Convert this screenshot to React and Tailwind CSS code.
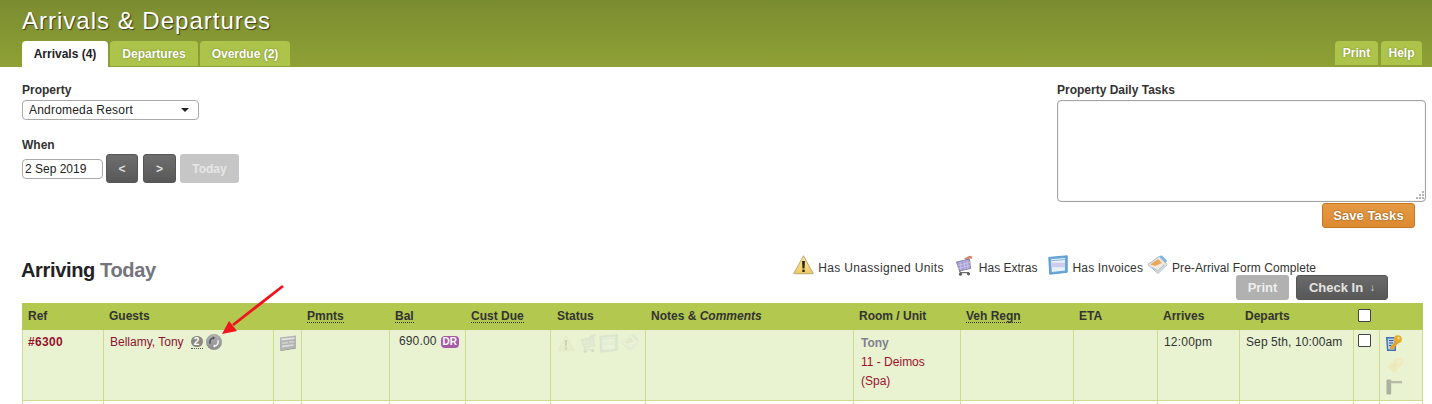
const COLS = [81, 170, 28, 88, 76, 85, 95, 208, 107, 113, 84, 82, 114, 26, 43];

function Warn({ className = "" }) {
  return (
    <svg viewBox="0 0 21 20" className={className}>
      <defs>
        <linearGradient id="wg" x1="0" y1="0" x2="0" y2="1">
          <stop offset="0" stopColor="#fbeeb0" />
          <stop offset="1" stopColor="#efc860" />
        </linearGradient>
      </defs>
      <path d="M10.5 1 20.2 18.6H.8z" fill="url(#wg)" stroke="#c6b07a" strokeWidth="1.1" strokeLinejoin="round" />
      <path d="M9 6h3l-.5 7.6h-2z" fill="#2f2a18" />
      <rect x="9.3" y="14.6" width="2.4" height="2.4" fill="#2f2a18" />
    </svg>
  );
}
function Cart({ className = "" }) {
  return (
    <svg viewBox="0 0 18 21" className={className}>
      <path d="M9 3.5 14.5.8l3 .6-1 2.6-2-.6-3 1.6z" fill="#d28a6e" />
      <path d="M1.5 7 14.5 4l1 9.5-11 2.5z" fill="#a8a0d8" stroke="#77748f" strokeWidth=".8" />
      <path d="M5 6.5l1.2 8.5M9 5.5l1.2 9M11.8 5l1.2 9M2.5 10.5l12.5-3M3 13.5l12-3" stroke="#cfcaee" strokeWidth=".7" />
      <path d="M4.5 16l1 1.6h8.5" stroke="#6d6d6d" strokeWidth="1.2" fill="none" />
      <circle cx="5.5" cy="19.2" r="1.6" fill="#5f5f5f" />
      <circle cx="13.5" cy="18.8" r="1.6" fill="#5f5f5f" />
    </svg>
  );
}
function Invoice({ className = "" }) {
  return (
    <svg viewBox="0 0 21 21" className={className}>
      <path d="M.8 2.5 20.2.8v17.4L1.8 20.2z" fill="#6aa9da" stroke="#4a8cc0" strokeWidth=".8" />
      <path d="M3.2 4.5 17.8 3.2v13L4 17.8z" fill="#e9f0f9" />
      <path d="M3.8 8.2h14v4.6h-13.6z" fill="#cfcbec" />
      <path d="M3.5 6 17.8 4.8" stroke="#88aede" strokeWidth="1" />
    </svg>
  );
}
function Form({ className = "" }) {
  return (
    <svg viewBox="0 0 21 20" className={className}>
      <path d="M.8 9.5 12 1.5l8.2 8-9.2 9z" fill="#f7eadb" stroke="#9fb9cf" strokeWidth="1" />
      <path d="M3 9.5l8-5.5 4 4-7 3z" fill="#e9a860" />
      <path d="M12 1l3-.5 5.2 5.5-2 2z" fill="#7fb5de" />
      <path d="M5 12.5l6 3.6 6.5-6.6" stroke="#a9c6df" strokeWidth="1.2" fill="none" />
    </svg>
  );
}
function RefundCard({ className = "" }) {
  return (
    <svg viewBox="0 0 16 16" className={className}>
      <path d="M0 2.5 16 .5v12L0 15.5z" fill="#b4b4b4" />
      <path d="M1.5 3.8 14.5 2.3v1.6L1.5 5.6z" fill="#e4e4e4" />
      <path d="M2 7.5 8 6.8v1.4l-6 .8zM9 6.6l5-.6v1.4l-5 .6z" fill="#d4d4d4" />
      <path d="M2 10.6 13.5 9.2v1.6L2 12.4z" fill="#dcdcdc" />
      <path d="M0 15.5 16 12.5v1L1 16z" fill="#919191" />
    </svg>
  );
}
function Recur({ className = "" }) {
  return (
    <svg viewBox="0 0 16 16" className={className}>
      <defs>
        <linearGradient id="rg" x1="0" y1="0" x2="0" y2="1">
          <stop offset="0" stopColor="#b4b4b4" />
          <stop offset="1" stopColor="#8a8a8a" />
        </linearGradient>
      </defs>
      <circle cx="8" cy="8" r="7.8" fill="url(#rg)" stroke="#858585" strokeWidth=".4" />
      <path d="M4.2 9.8A4.3 4.3 0 0 1 7 3.9" stroke="#48545a" strokeWidth="1.5" fill="none" />
      <path d="M6.8 2.2l2.4 1.8-2.4 1.8z" fill="#48545a" />
      <path d="M11.8 6.2A4.3 4.3 0 0 1 9 12.1" stroke="#f4f4f4" strokeWidth="1.5" fill="none" />
      <path d="M9.2 13.8l-2.4-1.8 2.4-1.8z" fill="#f4f4f4" />
    </svg>
  );
}
function EditKey({ className = "" }) {
  return (
    <svg viewBox="0 0 16 16" className={className}>
      <path d="M0 2h10v14H1z" fill="#3f70b0" />
      <path d="M1.6 3.4h7v11h-6.4z" fill="#bcd0ec" />
      <path d="M3 5.5h4.5M3 8h4M3 10.5h2.5" stroke="#35588f" strokeWidth="1" />
      <circle cx="11.8" cy="4.2" r="4" fill="#e9ab30" />
      <circle cx="12.6" cy="3.2" r="1.1" fill="#fbe9a8" />
      <path d="M9.8 6.2 3.8 12.5l1 2.2h1.6l6-6.6z" fill="#e3a12a" />
    </svg>
  );
}
function Tag({ className = "" }) {
  return (
    <svg viewBox="0 0 18 18" className={className}>
      <path d="M1 11 10 2h7v6l-9 9z" fill="#f1e8b6" />
      <circle cx="13.5" cy="5" r="1.6" fill="#e9f3d2" />
      <path d="M6 10l3-3 2 2-3 3z" fill="#e8e1ac" />
    </svg>
  );
}
function Door({ className = "" }) {
  return (
    <svg viewBox="0 0 17 17" className={className}>
      <rect x="0.5" y="0.5" width="5" height="16" rx="1" fill="#aab19c" />
      <rect x="4" y="2" width="13" height="2.6" fill="#b6bca9" />
    </svg>
  );
}

const thBase = "h-[26px] border border-[#b2c84e] bg-[#b2c84e] pl-[5px] pr-[5px] pb-[2px] text-left align-middle text-[12px] font-bold text-[#333333]";
const dotted = "border-b border-dotted border-[#333333] leading-[12px] inline-block";
const td = "border border-[#cedc8f] px-[5px] align-top text-[12px] text-[#333333]";

function Tab({ children, active, className = "" }) {
  return (
    <div
      className={`flex items-center justify-center rounded-t-[4px] text-[12px] font-bold ${
        active ? "h-[26px] bg-white text-[#222222]" : "h-[25px] bg-[#adc44b] text-white [text-shadow:0_0_2px_#6e7f2c]"
      } ${className}`}
    >
      {children}
    </div>
  );
}

export default function App() {
  return (
    <div className="h-[404px] w-[1432px] overflow-hidden bg-white font-['Liberation_Sans',Arial,sans-serif]">
      <header className="flex h-[67px] flex-col bg-gradient-to-b from-[#7a8c30] to-[#8fa135] pl-[22px] pr-[10px]">
        <h1 className="mt-[6px] h-[35px] text-[24px] leading-[29px] tracking-[1px] text-white [text-shadow:1px_1px_1px_#3d3d1a]">
          Arrivals &amp; Departures
        </h1>
        <div className="flex justify-between">
          <div className="flex gap-[2px]">
            <Tab active className="w-[86px]">Arrivals (4)</Tab>
            <Tab className="w-[88px]">Departures</Tab>
            <Tab className="w-[90px]">Overdue (2)</Tab>
          </div>
          <div className="flex gap-[3px]">
            <Tab className="!h-[24px] w-[43px]">Print</Tab>
            <Tab className="!h-[24px] w-[41px]">Help</Tab>
          </div>
        </div>
      </header>

      <section className="flex h-[188px] justify-between pl-[22px] pr-[6px] text-[12px] text-[#333333]">
        <div>
          <div className="mt-[16px] h-[17px] text-[12px] font-bold leading-[14px] text-[#333333]">Property</div>
          <div className="flex h-[20px] w-[177px] items-center justify-between rounded-[4px] border border-[#aaaaaa] pl-[6px] pr-[9px] text-[12px] text-[#222222]">
            <span className="tracking-[0.2px]">Andromeda Resort</span>
            <span className="h-0 w-0 border-x-[4px] border-t-[4px] border-x-transparent border-t-[#222222]" />
          </div>
          <div className="mt-[18px] h-[16px] text-[12px] font-bold leading-[14px] text-[#333333]">When</div>
          <div className="flex items-center">
            <div className="flex h-[20px] w-[81px] items-center rounded-[4px] border border-[#aaaaaa] pl-[2px] text-[12px] text-[#222222]">
              2 Sep 2019
            </div>
            <button className="ml-[3px] h-[29px] w-[32px] rounded-[3px] border border-[#555555] bg-gradient-to-b from-[#6e6e6e] to-[#585858] text-[12px] font-bold text-[#dddddd]">&lt;</button>
            <button className="ml-[5px] h-[29px] w-[33px] rounded-[3px] border border-[#555555] bg-gradient-to-b from-[#6e6e6e] to-[#585858] text-[12px] font-bold text-[#dddddd]">&gt;</button>
            <button className="ml-[4px] h-[29px] w-[59px] rounded-[3px] bg-[#c6c6c6] text-[12px] font-bold text-[#e6e6e6]">Today</button>
          </div>
        </div>
        <div className="flex w-[369px] flex-col">
          <div className="mt-[16px] h-[17px] text-[12px] font-bold leading-[14px] text-[#333333]">Property Daily Tasks</div>
          <div className="relative h-[102px] rounded-[4px] border border-[#a4a4a4] shadow-[inset_0_0_1px_#a4a4a4]">
            <svg viewBox="0 0 9 9" className="absolute bottom-[1px] right-[1px] h-[9px] w-[9px]">
              <path d="M7 0h2v2H7zM4 3h2v2H4zM7 3h2v2H7zM1 6h2v2H1zM4 6h2v2H4zM7 6h2v2H7z" fill="#b5b5b5" />
            </svg>
          </div>
          <button className="ml-[265px] mt-[1px] h-[25px] w-[93px] rounded-[3px] border border-[#c8761d] bg-gradient-to-b from-[#e59a45] to-[#dd8a30] text-[13px] font-bold tracking-[0.05px] text-white [text-shadow:0_0_2px_#7a4a10]">
            Save Tasks
          </button>
        </div>
      </section>

      <div className="flex h-[48px] items-start justify-between pl-[21px] pr-[116px]">
        <h2 className="mt-[3px] text-[20px] font-bold leading-[24px] tracking-[-0.35px] text-[#222222]">
          Arriving <span className="text-[#74747c]">Today</span>
        </h2>
        <div className="flex flex-col items-end">
          <div className="flex h-[20px] items-start text-[12px] text-[#333333]">
            <Warn className="mr-[4px] h-[20px] w-[21px]" />
            <span className="mt-[4px] tracking-[0.35px]">Has Unassigned Units</span>
            <Cart className="ml-[11px] mr-[6px] h-[21px] w-[18px]" />
            <span className="mt-[4px]">Has Extras</span>
            <Invoice className="ml-[10px] mr-[5px] h-[20px] w-[20px]" />
            <span className="mt-[4px] tracking-[0.15px]">Has Invoices</span>
            <Form className="ml-[4px] mr-[4px] h-[20px] w-[21px]" />
            <span className="mt-[4px] tracking-[0.05px]">Pre-Arrival Form Complete</span>
          </div>
          <div className="-mr-[72px] flex gap-[7px]">
            <button className="h-[25px] w-[53px] rounded-[3px] bg-[#b1b1b1] text-[13px] font-bold text-[#eeeeee]">Print</button>
            <button className="flex h-[25px] w-[92px] items-center justify-center gap-[7px] rounded-[3px] border border-[#555555] bg-gradient-to-b from-[#6a6a6a] to-[#585858] text-[13px] font-bold text-[#e4e4e4]">
              <span>Check In</span>
              <span className="text-[10px] font-normal">↓</span>
            </button>
          </div>
        </div>
      </div>

      <div className="relative pl-[22px]">
        <table className="w-[1400px] table-fixed border-collapse">
          <colgroup>
            {COLS.map((w, i) => (
              <col key={i} style={{ width: w }} />
            ))}
          </colgroup>
          <thead>
            <tr>
              <th className={thBase}>Ref</th>
              <th className={thBase} colSpan={2}>Guests</th>
              <th className={thBase}><span className={dotted}>Pmnts</span></th>
              <th className={thBase}><span className={dotted}>Bal</span></th>
              <th className={thBase}><span className={dotted}>Cust Due</span></th>
              <th className={thBase + " !pl-[6px]"}>Status</th>
              <th className={thBase}>Notes &amp; <em>Comments</em></th>
              <th className={thBase}>Room / Unit</th>
              <th className={thBase}><span className={dotted}>Veh Regn</span></th>
              <th className={thBase}>ETA</th>
              <th className={thBase}>Arrives</th>
              <th className={thBase}>Departs</th>
              <th className={thBase + " !px-[4px]"}>
                <span className="block h-[13px] w-[13px] rounded-[1px] border border-[#444444] bg-white" />
              </th>
              <th className={thBase} />
            </tr>
          </thead>
          <tbody>
            <tr className="h-[71px] bg-[#e9f3d2]">
              <td className={td + " pt-[5px] !pl-[5px] font-bold leading-[15px] tracking-[0.3px] !text-[#99112e]"}>#6300</td>
              <td className={td + " pt-[4px] pl-[6px]"}>
                <div className="flex items-start">
                  <span className="mt-[1px] leading-[15px] text-[#8c1230]">Bellamy, Tony</span>
                  <span className="ml-[7px] mt-[2px] border-b border-dotted border-[#555555] pb-[1px]">
                    <span className="flex h-[11px] w-[12px] items-center justify-center rounded-full bg-[#8a8a80] text-[10px] font-bold leading-none text-white">2</span>
                  </span>
                  <Recur className="ml-[3px] h-[16px] w-[16px]" />
                </div>
              </td>
              <td className={td + " !px-[6px] pt-[5px]"}><RefundCard className="h-[16px] w-[16px]" /></td>
              <td className={td} />
              <td className={td + " pt-[4px] text-right !pr-[6px]"}>
                <div className="flex items-center justify-end">
                  <span className="leading-[15px] tracking-[0.15px]">690.00</span>
                  <span className="ml-[4px] rounded-[4px] bg-[#a85aa8] px-[2px] text-[10px] font-bold leading-[12px] text-white">DR</span>
                </div>
              </td>
              <td className={td} />
              <td className={td + " pt-[3px] !pl-[6px]"}>
                <div className="flex items-center opacity-[0.14] saturate-50">
                  <Warn className="mr-[5px] h-[19px] w-[18px]" />
                  <Cart className="mr-[2px] h-[20px] w-[17px]" />
                  <Invoice className="mr-[2px] h-[19px] w-[19px]" />
                  <Form className="h-[18px] w-[20px]" />
                </div>
              </td>
              <td className={td} />
              <td className={td + " pt-[4px] !pl-[7px] leading-[19px]"}>
                <div className="font-bold text-[#80808a]">Tony</div>
                <div className="text-[#99112e]">11 - Deimos</div>
                <div className="text-[#99112e]">(Spa)</div>
              </td>
              <td className={td} />
              <td className={td} />
              <td className={td + " pt-[5px] !pl-[6px] leading-[15px] tracking-[0.2px]"}>12:00pm</td>
              <td className={td + " pt-[5px] !pl-[6px] leading-[15px] tracking-[0.1px]"}>Sep 5th, 10:00am</td>
              <td className={td + " !px-[4px] pt-[4px]"}>
                <span className="block h-[13px] w-[13px] rounded-[1px] border border-[#444444] bg-white" />
              </td>
              <td className={td + " pt-[5px] !pl-[6px]"}>
                <div className="flex flex-col gap-[5px]">
                  <EditKey className="h-[16px] w-[16px]" />
                  <Tag className="h-[18px] w-[18px] opacity-70" />
                  <Door className="h-[16px] w-[16px]" />
                </div>
              </td>
            </tr>
            <tr className="h-[10px]">
              {COLS.map((_, i) => (
                <td key={i} className={td} />
              ))}
            </tr>
          </tbody>
        </table>
        <svg viewBox="0 0 70 56" className="pointer-events-none absolute left-[217px] top-[-19px] h-[56px] w-[70px]">
          <path d="M66 2 16 41" stroke="#f0141e" strokeWidth="2.8" />
          <path d="M5 50 12 37 20 47z" fill="#f0141e" />
        </svg>
      </div>
    </div>
  );
}
